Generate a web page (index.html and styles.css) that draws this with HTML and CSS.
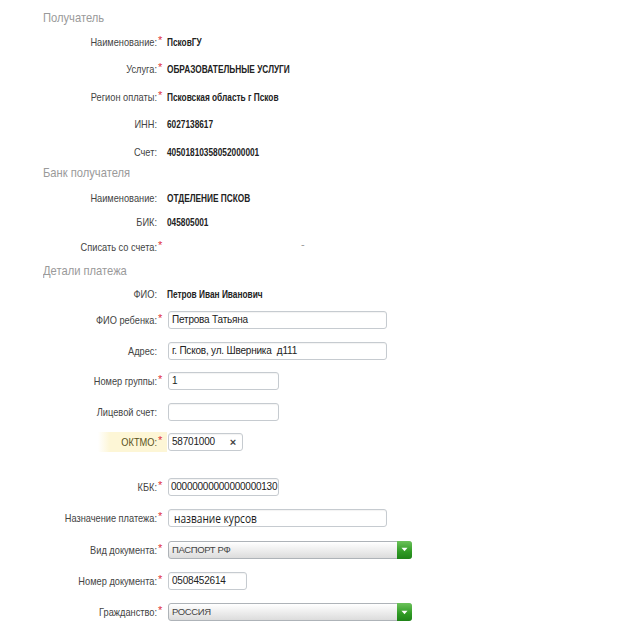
FILE: index.html
```html
<!DOCTYPE html>
<html lang="ru">
<head>
    <meta charset="UTF-8">
    <title>Оплата</title>
    <link rel="stylesheet" href="styles.css">
</head>
<body>
    <div class="form">
        <h3 class="section first">Получатель</h3>
        <div class="group g-recipient">
            <div class="row"><span class="label">Наименование:</span><span class="req">*</span><span class="value">ПсковГУ</span></div>
            <div class="row"><span class="label">Услуга:</span><span class="req">*</span><span class="value">ОБРАЗОВАТЕЛЬНЫЕ УСЛУГИ</span></div>
            <div class="row"><span class="label">Регион оплаты:</span><span class="req">*</span><span class="value">Псковская область г Псков</span></div>
            <div class="row"><span class="label">ИНН:</span><span class="req"></span><span class="value">6027138617</span></div>
            <div class="row"><span class="label">Счет:</span><span class="req"></span><span class="value">40501810358052000001</span></div>
        </div>

        <h3 class="section bank">Банк получателя</h3>
        <div class="group g-bank">
            <div class="row"><span class="label">Наименование:</span><span class="req"></span><span class="value">ОТДЕЛЕНИЕ ПСКОВ</span></div>
            <div class="row"><span class="label">БИК:</span><span class="req"></span><span class="value">045805001</span></div>
            <div class="row"><span class="label">Списать со счета:</span><span class="req">*</span><span class="field"><span class="dash">-</span></span></div>
        </div>

        <h3 class="section details">Детали платежа</h3>
        <div class="group g-fio">
            <div class="row"><span class="label">ФИО:</span><span class="req"></span><span class="value">Петров Иван Иванович</span></div>
        </div>
        <div class="group g-fields">
            <div class="row"><span class="label">ФИО ребенка:</span><span class="req">*</span><span class="field"><span class="input wide">Петрова Татьяна</span></span></div>
            <div class="row"><span class="label">Адрес:</span><span class="req"></span><span class="field"><span class="input wide">г. Псков, ул. Шверника&nbsp; д111</span></span></div>
            <div class="row"><span class="label">Номер группы:</span><span class="req">*</span><span class="field"><span class="input short">1</span></span></div>
            <div class="row"><span class="label">Лицевой счет:</span><span class="req"></span><span class="field"><span class="input short"></span></span></div>
            <div class="row hl"><span class="label">ОКТМО:</span><span class="req">*</span><span class="field"><span class="input oktmo">58701000<span class="clear">×</span></span></span></div>
        </div>
        <div class="group g-doc">
            <div class="row"><span class="label">КБК:</span><span class="req">*</span><span class="field"><span class="input short tight">00000000000000000130</span></span></div>
            <div class="row"><span class="label">Назначение платежа:</span><span class="req">*</span><span class="field"><span class="input wide big"><span class="txt">название курсов</span></span></span></div>
            <div class="row"><span class="label">Вид документа:</span><span class="req">*</span><span class="field"><span class="select">ПАСПОРТ РФ<span class="arrow"><svg width="7" height="5" viewBox="0 0 7 5"><path d="M0.5 0.8 L3.5 4.2 L6.5 0.8 Z" fill="#fff"/></svg></span></span></span></div>
            <div class="row"><span class="label">Номер документа:</span><span class="req">*</span><span class="field"><span class="input docnum">0508452614</span></span></div>
            <div class="row"><span class="label">Гражданство:</span><span class="req">*</span><span class="field"><span class="select">РОССИЯ<span class="arrow"><svg width="7" height="5" viewBox="0 0 7 5"><path d="M0.5 0.8 L3.5 4.2 L6.5 0.8 Z" fill="#fff"/></svg></span></span></span></div>
        </div>
    </div>
</body>
</html>
```

FILE: styles.css
```css
/* no narrow face installed, so the condensed look comes from scaleX */
body {
    margin: 0;
    background: #fff;
    font-family: 'Liberation Sans', Arial, sans-serif;
    color: #333;
}

.form {
    padding-top: 8px;
    width: 624px;
}

/* section headings */
.section {
    margin: 0;
    padding-left: 43px;
    font-size: 13px;
    font-weight: normal;
    color: #9a9a9a;
    transform: scaleX(0.86);
    transform-origin: 43px center;
}

.section.first {
    height: 20px;
    line-height: 20px;
}

.section.bank {
    height: 13px;
    line-height: 13px;
}

.section.details {
    height: 24px;
    line-height: 24px;
}

/* rows */
.row {
    display: grid;
    grid-template-columns: 157px 6px 1fr;
    align-items: center;
    font-size: 11px;
}

.g-recipient .row { height: 27.5px; }
.g-bank { padding-top: 7px; }
.g-bank .row { height: 24.5px; }
.g-fio .row { height: 22px; }
.g-fields .row { height: 30.5px; }
.g-doc { padding-top: 14px; }
.g-doc .row { height: 31.25px; }

.label {
    text-align: right;
    color: #444;
    white-space: nowrap;
    transform: scaleX(0.84);
    transform-origin: right center;
}

.req {
    color: #e0303a;
    margin-top: -4px;
    padding-left: 1px;
}

.value {
    padding-left: 5px;
    font-weight: bold;
    color: #222;
    font-size: 10.5px;
    white-space: nowrap;
    transform: scaleX(0.79);
    transform-origin: left center;
}

.dash {
    display: inline-block;
    margin-left: 133px;
    margin-top: -6px;
    color: #999;
}

.field {
    padding-left: 5px;
    display: flex;
}

/* inputs */
.input {
    box-sizing: border-box;
    height: 18px;
    line-height: 16px;
    border: 1px solid #c6cbd0;
    border-radius: 3px;
    padding: 0 3px;
    font-size: 10px;
    letter-spacing: -0.2px;
    color: #222;
    background: #fff;
    box-shadow: inset 0 1px 1px rgba(0, 0, 0, 0.05);
    white-space: nowrap;
    overflow: hidden;
}

.input.wide { width: 219px; }
.input.short { width: 111px; }
.input.docnum { width: 79px; }

.input.tight {
    padding: 0 0 0 2px;
    letter-spacing: -0.25px;
}

.input.oktmo {
    width: 75px;
    display: flex;
    justify-content: space-between;
}

.clear {
    font-size: 11px;
    font-weight: bold;
    color: #444;
    padding-right: 3px;
}

.input.big {
    padding-left: 5px;
    line-height: 17px;
}

.input.big .txt {
    display: inline-block;
    font-family: 'Open Sans', 'Liberation Sans', sans-serif;
    font-size: 13px;
    letter-spacing: 0;
    color: #1a1a1a;
    transform: scaleX(0.78);
    transform-origin: left center;
}

/* highlighted row (ОКТМО) */
.row.hl {
    background: linear-gradient(90deg, rgba(253, 246, 214, 0) 98px, #fdf6d6 110px, #fdf6d6 167px, rgba(253, 246, 214, 0) 167px) no-repeat center / 100% 20px;
}

.row.hl .label {
    color: #5a5220;
}

/* selects */
.select {
    box-sizing: border-box;
    position: relative;
    width: 244px;
    height: 18px;
    line-height: 16px;
    border: 1px solid #aeb3b8;
    border-radius: 3px;
    padding: 0 3px;
    font-size: 9.5px;
    letter-spacing: -0.35px;
    color: #444;
    background: linear-gradient(#ffffff, #ececec 55%, #dcdcdc);
}

.arrow {
    position: absolute;
    top: -1px;
    right: -1px;
    width: 15px;
    height: 18px;
    border-radius: 0 3px 3px 0;
    background: linear-gradient(#6cc25a, #2f9a24 60%, #1f8318);
    display: flex;
    align-items: center;
    justify-content: center;
}
```
